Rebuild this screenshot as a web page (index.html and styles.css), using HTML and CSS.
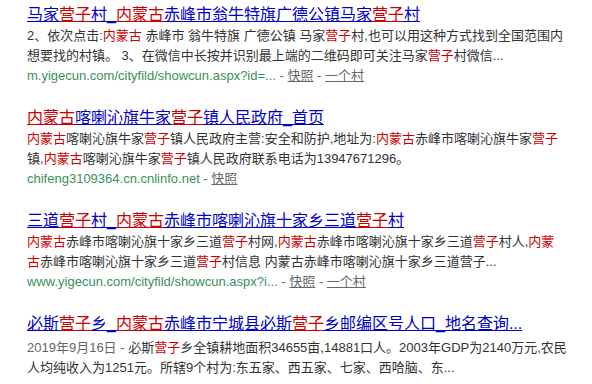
FILE: index.html
```html
<!DOCTYPE html>
<html lang="zh-CN">
<head>
    <meta charset="UTF-8">
    <meta name="viewport" content="width=device-width, initial-scale=1.0">
    <title>马家营子村 - 搜索结果</title>
    <link rel="stylesheet" href="styles.css">
</head>
<body>
    <div class="results">
        <div class="result">
            <h3 class="title"><a href="#">马家<em>营子</em>村_<em>内蒙古</em>赤峰市翁牛特旗广德公镇马家<em>营子</em>村</a></h3>
            <div class="abstract">2、依次点击:<em>内蒙古</em> 赤峰市 翁牛特旗 广德公镇 马家<em>营子</em>村,也可以用这种方式找到全国范围内<br>想要找的村镇。 3、在微信中长按并识别最上端的二维码即可关注马家<em>营子</em>村微信...</div>
            <div class="meta"><span class="url">m.yigecun.com/cityfild/showcun.aspx?id=...</span> - <a href="#">快照</a> - <a href="#">一个村</a></div>
        </div>

        <div class="result">
            <h3 class="title"><a href="#"><em>内蒙古</em>喀喇沁旗牛家<em>营子</em>镇人民政府_首页</a></h3>
            <div class="abstract"><em>内蒙古</em>喀喇沁旗牛家<em>营子</em>镇人民政府主营:安全和防护,地址为:<em>内蒙古</em>赤峰市喀喇沁旗牛家<em>营子</em><br>镇,<em>内蒙古</em>喀喇沁旗牛家<em>营子</em>镇人民政府联系电话为13947671296。</div>
            <div class="meta"><span class="url">chifeng3109364.cn.cnlinfo.net</span> - <a href="#">快照</a></div>
        </div>

        <div class="result">
            <h3 class="title"><a href="#">三道<em>营子</em>村_<em>内蒙古</em>赤峰市喀喇沁旗十家乡三道<em>营子</em>村</a></h3>
            <div class="abstract"><em>内蒙古</em>赤峰市喀喇沁旗十家乡三道<em>营子</em>村网,<em>内蒙古</em>赤峰市喀喇沁旗十家乡三道<em>营子</em>村人,<em>内蒙</em><br><em>古</em>赤峰市喀喇沁旗十家乡三道<em>营子</em>村信息 内蒙古赤峰市喀喇沁旗十家乡三道营子...</div>
            <div class="meta"><span class="url">www.yigecun.com/cityfild/showcun.aspx?i...</span> - <a href="#">快照</a> - <a href="#">一个村</a></div>
        </div>

        <div class="result">
            <h3 class="title"><a href="#">必斯<em>营子</em>乡_<em>内蒙古</em>赤峰市宁城县必斯<em>营子</em>乡邮编区号人口_地名查询...</a></h3>
            <div class="abstract dated"><span class="date">2019年9月16日 - </span>必斯<em>营子</em>乡全镇耕地面积34655亩,14881口人。2003年GDP为2140万元,农民<br>人均纯收入为1251元。所辖9个村为:东五家、西五家、七家、西哈脑、东...</div>
        </div>
    </div>
</body>
</html>
```

FILE: styles.css
```css
body {
    margin: 0;
    background: #fff;
    font-family: "Liberation Sans", Arial, "Noto Sans CJK SC", sans-serif;
    color: #333;
}

.results {
    width: 545px;
    padding: 4px 0 0 27px;
}

.result {
    margin-bottom: 21px;
}

.title {
    margin: 0;
    font-size: 16px;
    font-weight: normal;
    line-height: 22px;
}

.title a {
    color: #0000cc;
    text-decoration: underline;
}

.title em,
.abstract em {
    font-style: normal;
    color: #cc0000;
}

.title em {
    text-decoration: underline;
}

.abstract {
    font-size: 13px;
    line-height: 20px;
}

.abstract.dated {
    margin-top: 3px;
}

.date {
    color: #666;
}

.meta {
    font-size: 13px;
    line-height: 20px;
    color: #666;
}

.url {
    color: #3a8f5c;
}

.meta a {
    color: #666;
    text-decoration: underline;
}
```
